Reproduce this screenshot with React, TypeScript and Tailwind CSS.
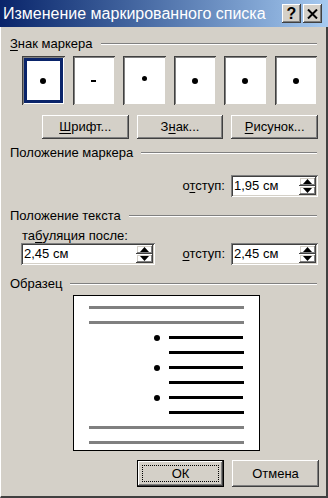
import React from "react";

const raised =
  "shadow-[inset_-1px_-1px_#404040,inset_1px_1px_#ffffff,inset_-2px_-2px_#808080,inset_2px_2px_#d4d0c8]";
const sunken =
  "shadow-[inset_1px_1px_#808080,inset_-1px_-1px_#ffffff,inset_2px_2px_#404040,inset_-2px_-2px_#d4d0c8]";

function U({ children }: { children: React.ReactNode }) {
  return <span className="underline underline-offset-2">{children}</span>;
}

function GroupTitle({ children }: { children: React.ReactNode }) {
  return (
    <div className="flex items-center h-4 pr-[9px]">
      <span className="whitespace-nowrap">{children}</span>
      <div className="flex-1 ml-[8px] border-t border-t-[#808080] border-b border-b-white" />
    </div>
  );
}

function Button({ children, def }: { children: React.ReactNode; def?: boolean }) {
  if (def) {
    return (
      <div className="h-[27px] border border-black">
        <div className={`h-full flex items-center justify-center p-[4px] ${raised}`}>
          <div className="w-full h-full border border-dotted border-black flex items-center justify-center">
            {children}
          </div>
        </div>
      </div>
    );
  }
  return (
    <div className={`h-[24px] flex items-center justify-center ${raised}`}>{children}</div>
  );
}

function Arrow({ up }: { up?: boolean }) {
  return (
    <div className={`flex-1 flex items-center justify-center ${raised}`}>
      <svg width="9" height="5" viewBox="0 0 9 5">
        {up ? <polygon points="4.5,0 9,5 0,5" fill="#000" /> : <polygon points="0,0 9,0 4.5,5" fill="#000" />}
      </svg>
    </div>
  );
}

function Spin({ value, w }: { value: string; w: string }) {
  return (
    <div className={`${w} h-[22px] bg-white flex p-[2px] ${sunken}`}>
      <div className="flex-1 flex items-center pl-[1px] text-[13px]">{value}</div>
      <div className="w-[17px] flex flex-col">
        <Arrow up />
        <Arrow />
      </div>
    </div>
  );
}

function BulletBox({ children, selected }: { children: React.ReactNode; selected?: boolean }) {
  return (
    <div className="h-[49px] bg-white p-[2px] shadow-[inset_1px_1px_#404040,inset_-1px_-1px_#d4d0c8,inset_2px_2px_#808080,inset_-2px_-2px_#ffffff]">
      <div className={`w-full h-full flex items-center justify-center ${selected ? "border-[3px] border-[#0a246a]" : ""}`}>
        {children}
      </div>
    </div>
  );
}

const dot = <div className="w-[6px] h-[6px] shrink-0 rounded-full bg-black" />;

export default function App() {
  return (
    <div
      className="w-[328px] h-[498px] bg-[#d4d0c8] flex flex-col text-[13px] text-black overflow-hidden"
      style={{ fontFamily: '"Liberation Sans", Arial, sans-serif' }}
    >
      <div className="h-[27px] shrink-0 flex items-center bg-gradient-to-r from-[#0a246a] to-[#a6caf0] pl-[3px] pr-[6px]">
        <span className="flex-1 text-white text-[16px] whitespace-nowrap">Изменение маркированного списка</span>
        <div className="flex gap-[2px]">
          <div className={`w-[19px] h-[19px] bg-[#d4d0c8] flex items-center justify-center font-bold text-[16px] ${raised}`}>?</div>
          <div className={`w-[19px] h-[19px] bg-[#d4d0c8] flex items-center justify-center ${raised}`}>
            <svg width="11" height="10" viewBox="0 0 11 10">
              <path d="M1 0.5 L10 9.5 M10 0.5 L1 9.5" stroke="#000" strokeWidth="2" />
            </svg>
          </div>
        </div>
      </div>
      <div className="flex-1 flex flex-col border-l border-l-white border-r-2 border-r-[#404040] border-b-2 border-b-[#404040] pl-[9px]">
        <div className="mt-[9px]">
          <GroupTitle>
            <U>З</U>нак маркера
          </GroupTitle>
        </div>
        <div className="grid grid-cols-6 gap-2 ml-[12px] mr-[9px] mt-[4px]">
          <BulletBox selected>{dot}</BulletBox>
          <BulletBox>
            <div className="w-[5px] h-[2px] bg-black" />
          </BulletBox>
          <BulletBox>
            <div className="w-[5px] h-[5px] rounded-full bg-black mb-[4px]" />
          </BulletBox>
          <BulletBox>{dot}</BulletBox>
          <BulletBox>{dot}</BulletBox>
          <BulletBox>{dot}</BulletBox>
        </div>
        <div className="grid grid-cols-3 gap-2 ml-[32px] mr-[8px] mt-[10px]">
          <Button>
            <U>Ш</U>рифт...
          </Button>
          <Button>
            З<U>н</U>ак...
          </Button>
          <Button>
            <U>Р</U>исунок...
          </Button>
        </div>
        <div className="mt-[6px]">
          <GroupTitle>Положение маркера</GroupTitle>
        </div>
        <div className="flex items-center justify-end gap-[6px] mr-[8px] mt-[14px]">
          <span>
            о<U>т</U>ступ:
          </span>
          <Spin value="1,95 см" w="w-[87px]" />
        </div>
        <div className="mt-[11px]">
          <GroupTitle>Положение текста</GroupTitle>
        </div>
        <div className="ml-[12px] mt-[4px] h-[15px] flex items-center">
          та<U>б</U>уляция после:
        </div>
        <div className="flex items-center mr-[8px]">
          <div className="ml-[11px]">
            <Spin value="2,45 см" w="w-[134px]" />
          </div>
          <div className="flex-1 flex items-center justify-end gap-[6px]">
            <span>
              <U>о</U>тступ:
            </span>
            <Spin value="2,45 см" w="w-[87px]" />
          </div>
        </div>
        <div className="mt-[11px]">
          <GroupTitle>Образец</GroupTitle>
        </div>
        <div className="ml-[63px] mt-[3px] w-[187px] h-[156px] shrink-0 bg-white border border-black flex flex-col pt-[10px] px-[15px]">
          <div className="h-[3px] bg-[#808080]" />
          <div className="h-[3px] bg-[#808080] mt-[12px]" />
          {[0, 1, 2].map((i) => (
            <div key={i} className="flex flex-col">
              <div className="h-[3px] mt-[12px] flex items-center">
                <div className="w-[71px] flex justify-end">{dot}</div>
                <div className="ml-[9px] w-[74px] h-[3px] bg-black" />
              </div>
              <div className="ml-[80px] h-[3px] bg-black mt-[12px]" />
            </div>
          ))}
          <div className="h-[3px] bg-[#808080] mt-[12px]" />
          <div className="h-[3px] bg-[#808080] mt-[12px]" />
        </div>
        <div className="grid grid-cols-2 gap-[8px] ml-[127px] mr-[7px] mt-[9px]">
          <Button def>ОК</Button>
          <div className={`h-[27px] flex items-center justify-center ${raised}`}>Отмена</div>
        </div>
      </div>
    </div>
  );
}
